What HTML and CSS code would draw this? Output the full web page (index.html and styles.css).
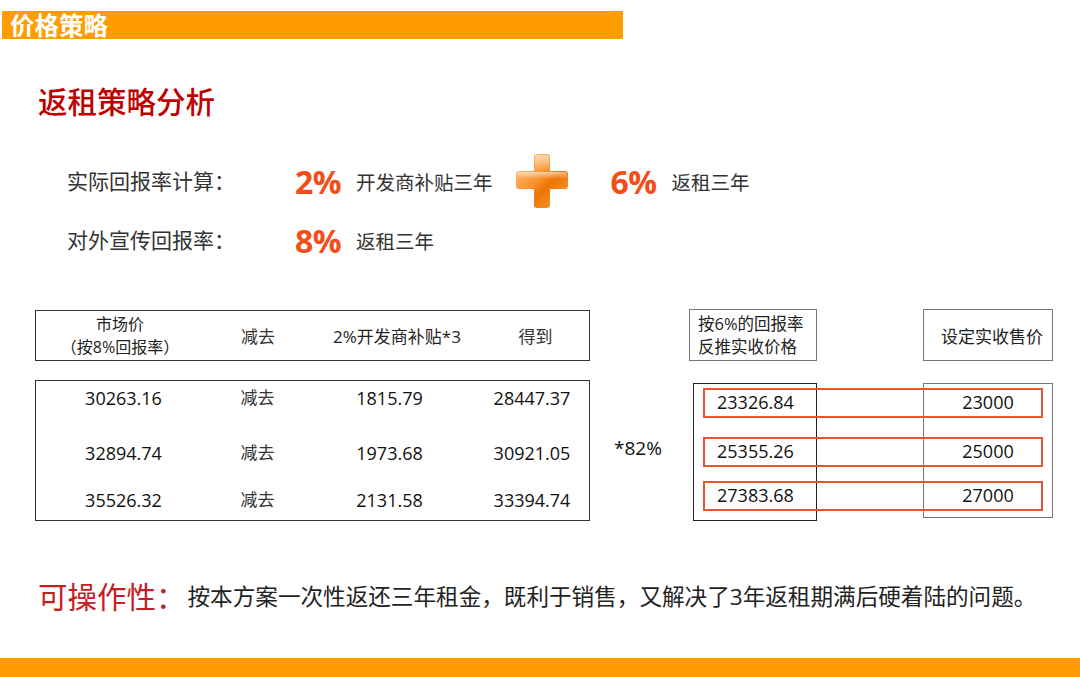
FILE: index.html
```html
<!DOCTYPE html>
<html lang="zh-CN">
<head>
<meta charset="utf-8">
<title>价格策略</title>
<link rel="stylesheet" href="styles.css">
</head>
<body>
<div class="page">
  <div class="topbar">价格策略</div>
  <h1 class="title">返租策略分析</h1>

  <div class="calc">
    <div class="row">
      <span class="label">实际回报率计算：</span>
      <span class="pct">2%</span>
      <span class="sub">开发商补贴三年</span>
      <svg class="plus" width="52" height="54" viewBox="0 0 52 54">
        <defs>
          <linearGradient id="pg" x1="0" y1="0" x2="52" y2="54" gradientUnits="userSpaceOnUse">
            <stop offset="0" stop-color="#FFC98A"/>
            <stop offset="0.45" stop-color="#F7922E"/>
            <stop offset="0.6" stop-color="#EE7406"/>
            <stop offset="1" stop-color="#F9A640"/>
          </linearGradient>
          <linearGradient id="hg" x1="0" y1="0" x2="0" y2="1">
            <stop offset="0" stop-color="#FFFFFF" stop-opacity="0.55"/>
            <stop offset="1" stop-color="#FFFFFF" stop-opacity="0"/>
          </linearGradient>
        </defs>
        <rect x="18" y="0" width="16" height="54" rx="3" fill="url(#pg)"/>
        <rect x="0" y="17" width="52" height="18" rx="3" fill="url(#pg)"/>
        <rect x="19" y="1" width="14" height="16" rx="2" fill="url(#hg)"/>
        <rect x="1" y="18" width="50" height="7" rx="2" fill="url(#hg)"/>
      </svg>
      <span class="pct">6%</span>
      <span class="sub">返租三年</span>
    </div>
    <div class="row">
      <span class="label">对外宣传回报率：</span>
      <span class="pct">8%</span>
      <span class="sub">返租三年</span>
    </div>
  </div>

  <div class="tables">
    <div class="lhead">
      <span class="cell stack"><span class="ln">市场价</span><span class="ln">（按8%回报率）</span></span>
      <span class="cell cn">减去</span>
      <span class="cell">2%开发商补贴*3</span>
      <span class="cell cn">得到</span>
    </div>
    <div class="ldata">
      <div class="drow r1">
        <span class="num">30263.16</span><span class="cn">减去</span><span class="num">1815.79</span><span class="num">28447.37</span>
      </div>
      <div class="drow r2">
        <span class="num">32894.74</span><span class="cn">减去</span><span class="num">1973.68</span><span class="num">30921.05</span>
      </div>
      <div class="drow r3">
        <span class="num">35526.32</span><span class="cn">减去</span><span class="num">2131.58</span><span class="num">33394.74</span>
      </div>
    </div>

    <div class="mult">*82%</div>

    <div class="rhead1"><span class="ln">按6%的回报率</span><span class="ln">反推实收价格</span></div>
    <div class="rhead2">设定实收售价</div>

    <div class="rbox1"></div>
    <div class="rbox2"></div>

    <div class="rrows">
      <div class="rrow"><span class="rv1">23326.84</span><span class="rv2">23000</span></div>
      <div class="rrow m2"><span class="rv1">25355.26</span><span class="rv2">25000</span></div>
      <div class="rrow m3"><span class="rv1">27383.68</span><span class="rv2">27000</span></div>
    </div>
  </div>

  <div class="note">
    <span class="nk">可操作性：</span>
    <span class="nt">按本方案一次性返还三年租金，既利于销售，又解决了3年返租期满后硬着陆的问题。</span>
  </div>

  <div class="bottombar"></div>
</div>
</body>
</html>
```

FILE: styles.css
```css
html, body {
  margin: 0;
  padding: 0;
  background: #ffffff;
}

body {
  font-family: "Open Sans", "Noto Sans CJK SC", sans-serif;
  color: #222;
}

.page {
  width: 1080px;
  height: 677px;
  display: flex;
  flex-direction: column;
  overflow: hidden;
}

.topbar {
  margin: 11px 0 0 2px;
  width: 621px;
  height: 28px;
  box-sizing: border-box;
  padding-left: 8px;
  background: #FF9C00;
  color: #ffffff;
  font-family: "Noto Sans CJK SC", sans-serif;
  font-size: 24.5px;
  font-weight: 700;
  line-height: 28px;
}

.title {
  margin: 43px 0 0 38px;
  font-family: "Noto Sans CJK SC", sans-serif;
  font-size: 29.5px;
  font-weight: 500;
  line-height: 36px;
  color: #C00000;
}

.calc {
  margin: 35px 0 0 67px;
  display: flex;
  flex-direction: column;
  gap: 3px;
}

.row {
  display: flex;
  align-items: center;
  height: 56px;
}

.label {
  width: 228px;
  font-size: 21px;
  color: #333;
  margin-top: -3px;
}

.pct {
  width: 61px;
  font-size: 32px;
  font-weight: 700;
  color: #F24E1A;
  letter-spacing: -0.5px;
}

.sub {
  font-size: 19.5px;
  color: #333;
}

.plus {
  margin: 0 43px 0 23px;
  flex: none;
}

.tables {
  margin: 42px 0 0 35px;
  display: grid;
  grid-template-columns: 555px 103px 124px 106px 130px;
  grid-template-rows: 51px 141px;
  row-gap: 19px;
}

.lhead {
  grid-column: 1;
  grid-row: 1;
  box-sizing: border-box;
  border: 1.5px solid #333;
  display: grid;
  grid-template-columns: 168px 108px 170px 1fr;
  align-items: center;
  text-align: center;
  font-size: 17px;
  color: #222;
}

.stack {
  display: flex;
  flex-direction: column;
  align-items: center;
  font-size: 16px;
  line-height: 23px;
}

.ln {
  display: block;
}

.cn {
  color: #333;
  font-size: 17px;
}

.ldata {
  grid-column: 1;
  grid-row: 2;
  box-sizing: border-box;
  border: 1.5px solid #333;
  display: flex;
  flex-direction: column;
}

.drow {
  display: grid;
  grid-template-columns: 175px 93px 171px 1fr;
  align-items: center;
  text-align: center;
  height: 28px;
  line-height: 28px;
}

.drow.r1 { margin-top: 3px; }
.drow.r2 { margin-top: 27px; }
.drow.r3 { margin-top: 19px; }

.num {
  font-size: 18px;
  color: #111;
}

.mult {
  grid-column: 2;
  grid-row: 2;
  align-self: center;
  margin-top: -6px;
  padding-left: 24px;
  font-size: 19px;
  color: #111;
}

.rhead1 {
  grid-column: 3;
  grid-row: 1;
  margin-left: -4px;
  margin-top: -1px;
  box-sizing: border-box;
  border: 1.5px solid #777;
  padding-left: 8px;
  display: flex;
  flex-direction: column;
  justify-content: center;
  font-size: 16.5px;
  line-height: 23px;
  color: #222;
}

.rhead2 {
  grid-column: 5;
  grid-row: 1;
  margin-top: -1px;
  box-sizing: border-box;
  border: 1.5px solid #777;
  padding-left: 8px;
  display: flex;
  align-items: center;
  justify-content: center;
  font-size: 17px;
  color: #222;
}

.rbox1 {
  grid-column: 3;
  grid-row: 2;
  margin-top: 3px;
  box-sizing: border-box;
  border: 1.5px solid #222;
}

.rbox2 {
  grid-column: 5;
  grid-row: 2;
  margin-top: 3px;
  margin-bottom: 3px;
  box-sizing: border-box;
  border: 1.5px solid #777;
}

.rrows {
  grid-column: 3 / 6;
  grid-row: 2;
  margin: 8px 10px 0 10px;
  align-self: start;
  display: flex;
  flex-direction: column;
}

.rrow {
  height: 30px;
  box-sizing: border-box;
  border: 2px solid #E9532F;
  padding-bottom: 3px;
  display: grid;
  grid-template-columns: 230px 1fr;
  align-items: center;
  font-size: 18px;
  color: #111;
}

.rrow.m2 { margin-top: 19px; }
.rrow.m3 { margin-top: 14px; }

.rv1 {
  padding-left: 12px;
}

.rv2 {
  text-align: center;
}

.note {
  margin: 54px 0 0 38px;
  display: flex;
  align-items: center;
  height: 40px;
}

.nk {
  font-family: "Noto Sans CJK SC", sans-serif;
  font-size: 29.5px;
  color: #C42024;
  font-weight: 400;
}

.nt {
  font-size: 22.6px;
  color: #222;
  margin-left: 2px;
}

.bottombar {
  margin-top: auto;
  height: 19px;
  background: #FF9C00;
}
```
